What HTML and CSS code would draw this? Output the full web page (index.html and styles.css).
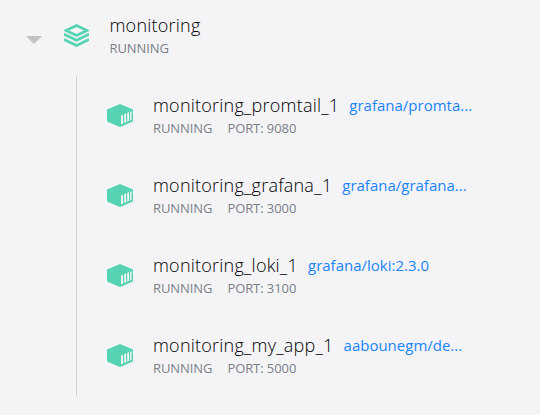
FILE: index.html
```
<!DOCTYPE html>
<html lang="en">
<head>
<meta charset="utf-8">
<title>Containers</title>
<link rel="stylesheet" href="styles.css">
</head>
<body>
<svg class="defs" width="0" height="0" aria-hidden="true">
  <symbol id="container" viewBox="0 0 26 23">
    <path fill="#56d3b2" d="M13 0 26 5.5V17.500L13 23 0 17.500V5.500Z"/>
    <path fill="#f4f4f6" d="M14 11.600l2-.7v8.600l-2 .8zM17.200 10.200l1.900-.7v8.800l-1.900.8zM20.200 9l1.800-.7v8.700l-1.800.8zM23.100 7.900l1.500-.6v8.600l-1.500.7z"/>
  </symbol>
</svg>
<main class="group">
  <header class="group-header">
    <svg class="caret" width="16" height="8" viewBox="0 0 16 8"><path fill="#c2c2c2" d="M0 0H16L8 8Z"/></svg>
    <svg class="stack" width="25" height="24" viewBox="0 0 25 24" fill="none" stroke="#56d3b2" stroke-width="2.700">
      <path d="M12.500 1.500 23 6.500 12.500 11.500 2 6.500Z"/>
      <path d="M0 10.300 12.500 16.300 25 10.300M0 15.500 12.500 21.500 25 15.500"/>
    </svg>
    <div class="info">
      <div class="name">monitoring</div>
      <div class="meta"><span>RUNNING</span></div>
    </div>
  </header>
  <ul class="containers">
    <li class="row">
      <svg class="cube" width="26" height="23"><use href="#container"/></svg>
      <div class="info">
        <div class="title"><span class="name">monitoring_promtail_1</span><a class="image">grafana/promta...</a></div>
        <div class="meta"><span>RUNNING</span><span>PORT: 9080</span></div>
      </div>
    </li>
    <li class="row">
      <svg class="cube" width="26" height="23"><use href="#container"/></svg>
      <div class="info">
        <div class="title"><span class="name">monitoring_grafana_1</span><a class="image">grafana/grafana...</a></div>
        <div class="meta"><span>RUNNING</span><span>PORT: 3000</span></div>
      </div>
    </li>
    <li class="row">
      <svg class="cube" width="26" height="23"><use href="#container"/></svg>
      <div class="info">
        <div class="title"><span class="name">monitoring_loki_1</span><a class="image">grafana/loki:2.3.0</a></div>
        <div class="meta"><span>RUNNING</span><span>PORT: 3100</span></div>
      </div>
    </li>
    <li class="row">
      <svg class="cube" width="26" height="23"><use href="#container"/></svg>
      <div class="info">
        <div class="title"><span class="name">monitoring_my_app_1</span><a class="image">aabounegm/de...</a></div>
        <div class="meta"><span>RUNNING</span><span>PORT: 5000</span></div>
      </div>
    </li>
  </ul>
</main>
</body>
</html>
```
FILE: styles.css
```
body {
  margin: 0;
  background: #f4f4f6;
  font-family: "Open Sans", sans-serif;
  font-weight: 300;
}
.defs { display: block; }
.group-header {
  display: flex;
  align-items: flex-start;
  height: 63px;
  padding: 13px 0 0 26px;
}
.caret { margin: 23px 22px 0 0; }
.stack { margin: 11px 20.500px 0 0; }
.name {
  font-size: 18px;
  line-height: 24px;
  letter-spacing: 0.220px;
  color: #000;
}
.meta {
  display: flex;
  gap: 15px;
  margin-top: 1px;
  font-size: 13px;
  line-height: 20px;
  font-weight: 400;
  letter-spacing: -0.080px;
  color: #7b7f87;
}
.containers {
  margin: 0 0 0 76px;
  padding: 0;
  list-style: none;
  border-left: 1px solid #d2d2d5;
}
.row {
  display: flex;
  align-items: flex-start;
  height: 63px;
  padding: 17px 0 0 30px;
}
.cube { margin: 11px 20px 0 0; }
.title {
  display: flex;
  align-items: flex-start;
  gap: 10px;
}
.image {
  font-size: 15px;
  line-height: 24px;
  font-weight: 400;
  color: #1a84ff;
}
```
